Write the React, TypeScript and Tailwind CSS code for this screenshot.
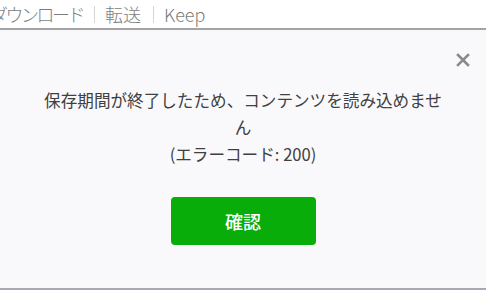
const FONT = "font-['Noto_Sans_CJK_JP','Noto_Sans',sans-serif]";

export default function App() {
  return (
    <div className={`w-[486px] h-[290px] overflow-hidden bg-white flex flex-col ${FONT}`}>
      {/* 上部メニュー */}
      <div className="h-[30px] shrink-0 flex items-center border-b-2 border-[#a3a3a3] text-[18px] text-[#7d7d7d] leading-none font-light whitespace-nowrap">
        <span className="ml-[-10px] tracking-[-2.5px]">ダウンロード</span>
        <span className="ml-[11px] mr-[10px] h-[17px] w-px bg-[#d6d6d6]" />
        <span>転送</span>
        <span className="ml-[12px] mr-[10px] h-[17px] w-px bg-[#d6d6d6]" />
        <span>Keep</span>
      </div>

      {/* ダイアログ */}
      <div className="flex-1 bg-[#f9f9fb] border-b-2 border-[#a8a8b8] flex flex-col items-center relative">
        <button className="absolute right-[16px] top-[23px] text-[#8a8a8a]">
          <svg width="14" height="14" viewBox="0 0 14 14" fill="none" stroke="currentColor" strokeWidth="2.6" strokeLinecap="square">
            <path d="M2 2L12 12M12 2L2 12" />
          </svg>
        </button>
        <p className="mt-[57px] w-[412px] text-center text-[16.6px] leading-[27px] text-[#404040]">
          保存期間が終了したため、コンテンツを読み込めません
          <br />
          (エラーコード: 200)
        </p>
        <button className="mt-[29px] w-[145px] h-[48px] rounded-[4px] bg-[#09ad09] text-white text-[18px] font-medium">
          確認
        </button>
      </div>
    </div>
  );
}
